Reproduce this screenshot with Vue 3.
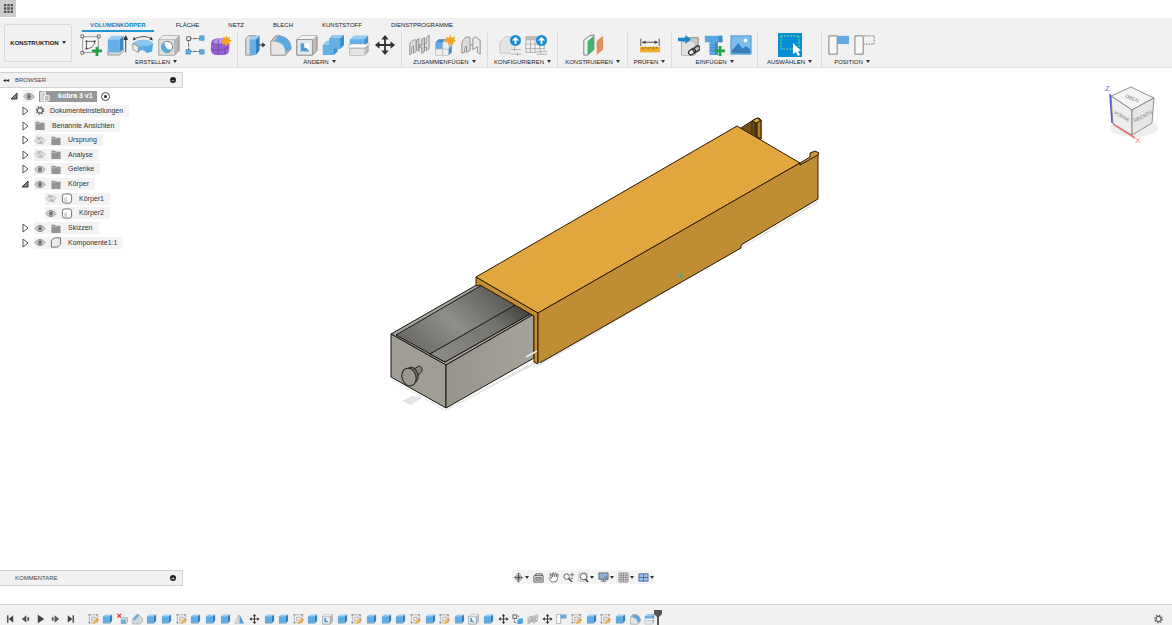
<script setup>
const tabs = ['VOLUMENKÖRPER', 'FLÄCHE', 'NETZ', 'BLECH', 'KUNSTSTOFF', 'DIENSTPROGRAMME']

const groups = [
  { label: 'ERSTELLEN', size: 'create', icons: ['sketch-new', 'extrude', 'revolve', 'hole', 'pattern', 'form'] },
  { label: 'ÄNDERN', size: 'modify', icons: ['presspull', 'fillet', 'shell', 'combine', 'split', 'move'] },
  { label: 'ZUSAMMENFÜGEN', size: 'three', icons: ['joint', 'component', 'joint-origin'] },
  { label: 'KONFIGURIEREN', size: 'two', icons: ['configure', 'config-table'] },
  { label: 'KONSTRUIEREN', size: 'two', icons: ['plane'] },
  { label: 'PRÜFEN', size: 'one', icons: ['measure'] },
  { label: 'EINFÜGEN', size: 'three', icons: ['insert', 'fastener', 'image'] },
  { label: 'AUSWÄHLEN', size: 'select', icons: ['select'] },
  { label: 'POSITION', size: 'position', icons: ['capture', 'revert'] }
]

const tree = [
  { name: 'Dokumenteinstellungen', level: 1, icon: 'gear' },
  { name: 'Benannte Ansichten', level: 1, icon: 'folder', views: true },
  { name: 'Ursprung', level: 1, icon: 'folder', eye: 'eye-off' },
  { name: 'Analyse', level: 1, icon: 'folder', eye: 'eye-off' },
  { name: 'Gelenke', level: 1, icon: 'folder', eye: 'eye' },
  { name: 'Körper', level: 1, icon: 'folder', eye: 'eye', open: true },
  { name: 'Körper1', level: 2, icon: 'body', eye: 'eye-off' },
  { name: 'Körper2', level: 2, icon: 'body', eye: 'eye' },
  { name: 'Skizzen', level: 1, icon: 'folder', eye: 'eye' },
  { name: 'Komponente1:1', level: 1, icon: 'cube', eye: 'eye' }
]

const nav = [
  { icon: 'orbit', name: 'Orbit', menu: true },
  { icon: 'lookat', name: 'Ansehen' },
  { icon: 'hand', name: 'Pan' },
  { icon: 'zoom', name: 'Zoom' },
  { icon: 'fit', name: 'Einpassen', menu: true },
  { icon: 'display', name: 'Anzeige', menu: true },
  { icon: 'grid', name: 'Raster', menu: true },
  { icon: 'viewports', name: 'Ansichtsfenster', menu: true }
]

const playback = ['first', 'prev', 'play', 'next', 'last']

const features = (
  'sketch box remove chamfer box box sketch box box box mirror move box box ' +
  'sketch box shell box sketch box box box sketch box sketch box shell box ' +
  'move assemble joint move capture sketch box sketch box fillet split'
).split(' ')
</script>

<template>
  <div class="app">
    <svg class="defs" aria-hidden="true">
      <defs>
        <linearGradient id="blue" x1="0" y1="0" x2="1" y2="1">
          <stop offset="0" stop-color="#7dbdec" /><stop offset="1" stop-color="#4a9fdb" />
        </linearGradient>
        <linearGradient id="inside" x1="0" y1="0.8" x2="1" y2="0.2">
          <stop offset="0" stop-color="#63625f" /><stop offset="0.45" stop-color="#8f8e8b" /><stop offset="1" stop-color="#4d4c49" />
        </linearGradient>
        <linearGradient id="floor" x1="0" y1="0.7" x2="1" y2="0">
          <stop offset="0" stop-color="#8b8984" /><stop offset="0.6" stop-color="#73716c" /><stop offset="1" stop-color="#373531" />
        </linearGradient>
        <linearGradient id="side" x1="0" y1="0" x2="1" y2="0">
          <stop offset="0" stop-color="#98958d" /><stop offset="1" stop-color="#a5a29a" />
        </linearGradient>
      </defs>

      <symbol id="apps" viewBox="0 0 12 12">
        <path d="M1 1h2.6v2.6H1zM4.7 1h2.6v2.6H4.7zM8.4 1H11v2.6H8.4zM1 4.7h2.6v2.6H1zM4.7 4.7h2.6v2.6H4.7zM8.4 4.7H11v2.6H8.4zM1 8.4h2.6V11H1zM4.7 8.4h2.6V11H4.7zM8.4 8.4H11V11H8.4z" fill="#555" />
      </symbol>
      <symbol id="sketch-new" viewBox="0 0 24 24">
        <path d="M3 3h17v17H3z" stroke="#777" stroke-width=".8" fill="#f7f7f7" />
        <path d="M1 1h3v3H1zM19 1h3v3h-3zM1 19h3v3H1z" fill="#fff" stroke="#444" stroke-width=".8" />
        <path d="M7 16V8h9c0 5-4 8-9 8z" fill="none" stroke="#555" />
        <path d="M6 7h2v2H6zM15 7h2v2h-2zM6 15h2v2H6z" fill="#444" />
        <path d="M17 14h3v3h4v3h-4v4h-3v-4h-4v-3h4z" fill="#24a148" />
      </symbol>
      <symbol id="sketch" viewBox="0 0 24 24">
        <path d="M3 3h17v17H3z" fill="#f8f8f8" stroke="#888" stroke-width="1.200" />
        <path d="M1 1h4v4H1zM18 1h4v4h-4zM1 18h4v4H1z" fill="#999" />
        <path d="M8 16V8h8c0 4-3 8-8 8z" fill="none" stroke="#777" stroke-width="1.200" />
        <path d="M11 23l1-5 7-7 4 4-7 7z" fill="#efb043" />
        <path d="M19 11l4 4" stroke="#d0433b" stroke-width="2" />
      </symbol>
      <symbol id="extrude" viewBox="0 0 24 24">
        <path d="M2 19l4-3h13v3l-4 4H2z" fill="#d4d4d4" stroke="#888" stroke-width=".8" />
        <path d="M2 6l4-4h13l-4 4z" fill="#9bcdf3" />
        <path d="M2 6h13v14H2z" fill="#65aee6" />
        <path d="M15 6l4-4v14l-4 4z" fill="#3a89c7" />
        <path d="M21.500 20V4M19.500 6l2-4 2 4z" stroke="#333" fill="#333" />
      </symbol>
      <symbol id="box" viewBox="0 0 24 24">
        <path d="M2 19l4-3h16l-5 7H2z" fill="#c9c9c9" />
        <path d="M2 6l5-4h15l-5 4z" fill="#9bcdf3" />
        <path d="M2 6h15v15H2z" fill="#5fabe5" />
        <path d="M17 6l5-4v14l-5 5z" fill="#347fbb" />
      </symbol>
      <symbol id="revolve" viewBox="0 0 24 24">
        <path d="M1 10c6-5 17-5 22 0l-1 9-6 2c-2-4-6-4-8-2l-6-2z" fill="url(#blue)" />
        <path d="M1 10c6-5 17-5 22 0l-6 4c-3-2-7-2-10 0z" fill="#8fc7f1" />
        <path d="M1 10l6 4v6l-6-3z" fill="#eee" stroke="#777" stroke-width=".8" />
        <path d="M2 6c6-4 14-4 19-1" fill="none" stroke="#444" />
        <path d="M1 7l1-4 2 3zM23 7l-4-1 2-3z" fill="#333" />
      </symbol>
      <symbol id="hole" viewBox="0 0 24 24">
        <path d="M1 6l5-4h17v16l-5 5H1z" fill="#b6b6b6" stroke="#888" />
        <path d="M1 6l5-4h17l-5 4z" fill="#ededed" /><path d="M1 6h17v17H1z" fill="#ddd" stroke="#aaa" stroke-width=".5" />
        <circle cx="10" cy="14" r="6" fill="#fff" stroke="#777" />
        <path d="M7 9a6 6 0 1 0 8 8c-4 1-8-3-8-8z" fill="#5aa8df" />
      </symbol>
      <symbol id="pattern" viewBox="0 0 24 24">
        <path d="M5 5h14M5 5v14M5 19h14" stroke="#555" stroke-dasharray="4 1" />
        <path d="M3 3h4v4H3z" fill="#fff" stroke="#555" />
        <path d="M17 2h5v5h-5zM2 17h5v5H2zM17 17h5v5h-5z" fill="#5dabe3" stroke="#3c8dca" stroke-width=".6" />
      </symbol>
      <symbol id="form" viewBox="0 0 24 24">
        <rect x="1" y="5" width="20" height="18" rx="6" fill="#9461ce" />
        <path d="M3 9c3-5 12-5 15-2-3 5-12 5-15 2z" fill="#bb91e8" />
        <path d="M2 10c5 2 12 2 16-2M1 16c6 3 14 2 20-2M9 6v17M16 9c1 4 1 9 0 13" fill="none" stroke="#6e40a5" stroke-width=".8" />
        <path d="M18 1l1 3 3-1-1 3 3 1-3 2 1 3-3-1-2 3-1-3-3 1 1-3-2-2 3-1-1-3 3 1z" fill="#f6a51b" />
      </symbol>
      <symbol id="presspull" viewBox="0 0 24 24">
        <path d="M2 5l3-3h8v18l-4 3H2z" fill="#ddd" stroke="#888" />
        <path d="M6 6l4-4h7l-4 4v17H6z" fill="#65aee6" /><path d="M13 6l4-4v16l-4 5z" fill="#2f83c3" />
        <path d="M6 6l4-4h7l-4 4z" fill="#9dcff4" /><path d="M16 12h5M20 10l3 2-3 2z" stroke="#333" fill="#333" />
      </symbol>
      <symbol id="fillet" viewBox="0 0 24 24">
        <path d="M1 8l5-6c10-1 17 5 17 14l-6 7H1z" fill="#c1c1c1" stroke="#888" />
        <path d="M1 8c9-2 16 3 16 12v3H1z" fill="#e5e5e5" stroke="#999" stroke-width=".7" />
        <path d="M9 2c8 0 14 6 14 14l-6 4c0-6-4-11-12-12z" fill="#58a8e2" />
      </symbol>
      <symbol id="chamfer" viewBox="0 0 24 24">
        <path d="M1 12L10 2h5l8 9v7l-5 5H1z" fill="#d8d8d8" stroke="#999" /><path d="M1 13L11 2l5 1L6 15z" fill="#5ba9e2" />
      </symbol>
      <symbol id="shell" viewBox="0 0 24 24">
        <path d="M1 6l5-4h17v16l-5 5H1z" fill="#bdbdbd" stroke="#888" /><path d="M1 6l5-4h17l-5 4z" fill="#f2f2f2" /><path d="M1 6h17v17H1z" fill="#e7e7e7" stroke="#888" stroke-width=".8" />
        <path d="M5 10h10v9H5z" fill="#fff" /><path d="M5 10v9h10l-4-4H9v-5z" fill="#4d9fda" />
      </symbol>
      <symbol id="combine" viewBox="0 0 24 24">
        <path d="M8 5l4-4h12v11l-4 4h-3v3l-4 4H1V12l4-4h3z" fill="#3b8dcb" />
        <path d="M8 5h12v11h-7v7H1V12h7z" fill="#64afe6" /><path d="M8 5l4-4h12l-4 4zM1 12l4-4h3v4z" fill="#91c9f2" />
      </symbol>
      <symbol id="split" viewBox="0 0 24 24">
        <path d="M2 6l5-4h15v7l-4 4H2z" fill="#3d90cd" /><path d="M2 6h16v7H2z" fill="#65afe7" /><path d="M2 6l5-4h15l-4 4z" fill="#9bcdf3" />
        <path d="M0 13l4-2h20l-5 4H0z" fill="#fff" stroke="#aaa" stroke-width=".6" />
        <path d="M2 16h16l4-3v6l-4 4H2z" fill="#c4c4c4" stroke="#888" stroke-width=".8" /><path d="M2 16h16v7H2z" fill="#e3e3e3" />
      </symbol>
      <symbol id="move" viewBox="0 0 24 24">
        <path d="M12 3v18M3 12h18" stroke="#333" stroke-width="2" />
        <path d="M12 1l4 5H8zM12 23l4-5H8zM1 12l5-4v8zM23 12l-5-4v8z" fill="#333" />
      </symbol>
      <symbol id="joint" viewBox="0 0 24 24">
        <path d="M2 23V12c0-4 5-7 7-5v12l-3 2v-8c-2 0-2 2-2 8z" fill="#dedede" stroke="#888" />
        <path d="M9 7l3-2v14l-3-3zM12 12h3V6l3-2v15l-3 2v-6h-3z" fill="#cfcfcf" stroke="#888" />
        <path d="M18 11l2-1V4l3-3v15l-3 2v-4l-2 1z" fill="#dedede" stroke="#888" />
      </symbol>
      <symbol id="joint-origin" viewBox="0 0 24 24">
        <path d="M2 21V10c1-4 4-7 7-7l2 1v14l-4 2v-7c-2 1-2 4-2 7z" fill="#dcdcdc" stroke="#888" />
        <path d="M11 12h3" stroke="#888" />
        <path d="M14 17V5l3-2 5 4v15l-3-2v-6l-2 1z" fill="#ececec" stroke="#888" />
      </symbol>
      <symbol id="component" viewBox="0 0 24 24">
        <path d="M2 9l3-3h14v14l-3 3H2z" fill="#bbb" stroke="#888" stroke-width=".7" />
        <path d="M2 9h7v7H2z" fill="#5facea" /><path d="M10 9h6v7h-6zM2 17h7v6H2zM10 17h6v6h-6z" fill="#ececec" /><path d="M2 9l3-3h7l-3 3zM16 16l3-3v7l-3 3z" fill="#3e90ce" />
        <path d="M18 0l1 4 4-1-1 3 2 2-3 1v3l-3-2-2 2-1-3-3-1 2-2-1-3 4 1z" fill="#f5a51e" />
      </symbol>
      <symbol id="configure" viewBox="0 0 24 24">
        <path d="M1 21V9l6-6h11v11l-6 7z" fill="#e4e4e4" stroke="#c4c4c4" /><path d="M13 16h11v8H13z" fill="#f1f1f1" /><path d="M13 17h11M13 22h11M17 15v4M20 20v4" stroke="#aaa" />
        <circle cx="18" cy="7" r="6" fill="#168ad5" /><path d="M18 3l4 4h-3v4h-2V7h-3z" fill="#fff" />
      </symbol>
      <symbol id="config-table" viewBox="0 0 24 24">
        <path d="M1 3h20v17H1z" fill="#f2f2f2" stroke="#aaa" /><path d="M1 3h20v4H1z" fill="#bbb" />
        <path d="M1 11h20M1 16h20M6 7v13M11 7v13M16 7v13" stroke="#aaa" /><path d="M13 17h11v7H13z" fill="#f2f2f2" /><path d="M13 19h11M13 22h11M17 17v4" stroke="#aaa" />
        <circle cx="18" cy="7" r="6" fill="#168ad5" /><path d="M18 3l4 4h-3v4h-2V7h-3z" fill="#fff" />
      </symbol>
      <symbol id="plane" viewBox="0 0 24 24">
        <path d="M2 7l6-5 5-1v16l-7 6H2z" fill="#f4f4f4" stroke="#777" /><path d="M6 8l7-6v15l-7 6z" fill="#41b36b" /><path d="M16 8l7-6v15l-7 6z" fill="#dc925d" />
      </symbol>
      <symbol id="measure" viewBox="0 0 24 24">
        <path d="M2 5v8M22 5v8M4 9h16" stroke="#444" /><path d="M3 9l4-2v4zM21 9l-4-2v4z" fill="#444" />
        <path d="M1 14h22v6H1z" fill="#f0ad2d" /><path d="M4 14v3M7 14v2M10 14v3M13 14v2M16 14v3M19 14v2" stroke="#8f6312" />
      </symbol>
      <symbol id="insert" viewBox="0 0 24 24">
        <path d="M4 9l4-5h14v13l-4 6H4z" fill="#c5c5c5" stroke="#888" /><path d="M4 9h14v14H4z" fill="#e2e2e2" />
        <path d="M0 4h8V1l6 5-6 5V8H0z" fill="#1686d0" />
        <rect x="11" y="17" width="8" height="5" rx="2.500" transform="rotate(-35 15 19)" fill="#f1f1f1" stroke="#333" stroke-width="1.500" />
        <rect x="16" y="14" width="8" height="5" rx="2.500" transform="rotate(-35 20 16)" fill="none" stroke="#333" stroke-width="1.500" />
      </symbol>
      <symbol id="fastener" viewBox="0 0 24 24">
        <path d="M1 2h19v7h-5v14H6V9H1z" fill="#5ba8e0" /><path d="M16 2h4v7h-4zM12 9h3v14h-3z" fill="#3b8cc8" /><path d="M6 12h9M6 15h9M6 18h9" stroke="#327fb8" stroke-width=".7" />
        <path d="M16 13h3v4h4v3h-4v4h-3v-4h-4v-3h4z" fill="#24a148" />
      </symbol>
      <symbol id="image" viewBox="0 0 24 24">
        <path d="M1 2h22v20H1z" fill="#7bbcec" stroke="#4a97d0" /><path d="M2 18l7-8 5 6 3-3 5 4v4H2z" fill="#347fb5" /><circle cx="17" cy="7" r="2" fill="#fff" />
      </symbol>
      <symbol id="select" viewBox="0 0 24 24">
        <path d="M0 0h24v24H0z" fill="#078ed2" /><path d="M3 3h18v13H3z" fill="none" stroke="#73d897" stroke-dasharray="2 1" />
        <path d="M15 10v11l3-2 2 4 2-1-2-4h3z" fill="#fff" />
      </symbol>
      <symbol id="capture" viewBox="0 0 24 24">
        <path d="M1 2h9v20H1z" fill="#f8f8f8" stroke="#777" /><path d="M10 2h13v9H10z" fill="#60ade5" />
      </symbol>
      <symbol id="revert" viewBox="0 0 24 24">
        <path d="M1 2h9v20H1z" fill="#f8f8f8" stroke="#777" /><path d="M11 2h11v9H11" fill="none" stroke="#777" stroke-dasharray="2 1" />
      </symbol>
      <symbol id="mirror" viewBox="0 0 24 24">
        <path d="M10 3v19H2z" fill="#e3e3e3" stroke="#999" /><path d="M12 2v20h10z" fill="#509fd7" />
      </symbol>
      <symbol id="remove" viewBox="0 0 24 24">
        <path d="M1 1l8 8M9 1L1 9" stroke="#d5333c" stroke-width="2.500" /><path d="M9 12l3-3h11v10l-3 3H9z" fill="#ddd" stroke="#777" /><path d="M9 13h10v9H9z" fill="#68afe0" />
      </symbol>
      <symbol id="assemble" viewBox="0 0 24 24">
        <path d="M2 3h8v8H2z" fill="#eee" stroke="#555" stroke-width="2" /><path d="M5 13v7h5M12 6h4" fill="none" stroke="#777" stroke-width="2" /><path d="M12 14l3-3h9v8l-3 4h-9z" fill="#4fa1df" />
      </symbol>
      <symbol id="folder" viewBox="0 0 12 12"><path d="M1 2h4l1 1h5v8H1z" fill="#949494" /><path d="M1 4h5l1-1" stroke="#d0d0d0" stroke-width=".7" fill="none" /></symbol>
      <symbol id="gear" viewBox="0 0 12 12">
        <circle cx="6" cy="6" r="4" fill="none" stroke="#666" stroke-width="1.500" stroke-dasharray="1.570 1.570" /><circle cx="6" cy="6" r="2.800" fill="none" stroke="#666" stroke-width="1.300" />
      </symbol>
      <symbol id="eye" viewBox="0 0 12 10"><path d="M1 5c3-4 7-4 10 0-3 4-7 4-10 0z" fill="#ddd" stroke="#888" /><circle cx="6" cy="5" r="2.200" fill="#777" /></symbol>
      <symbol id="eye-off" viewBox="0 0 12 10"><path d="M1 5c3-4 7-4 10 0-3 4-7 4-10 0zM3 1l6 8" fill="none" stroke="#a5a5a5" stroke-width=".8" /><circle cx="6" cy="5" r="2" fill="none" stroke="#a5a5a5" stroke-width=".7" /></symbol>
      <symbol id="body" viewBox="0 0 12 12"><rect x="1" y="1" width="10" height="10" rx="2.500" fill="#fff" stroke="#666" /><path d="M3 5h3v5H3z" fill="#d5d5d5" /></symbol>
      <symbol id="cube" viewBox="0 0 12 12"><path d="M1 4l3-3h7v7l-3 3H1z" fill="#eee" stroke="#666" stroke-linejoin="round" /><path d="M8 4v6M8 4l2-2" stroke="#ccc" stroke-width=".7" /></symbol>
      <symbol id="assembly" viewBox="0 0 12 12"><path d="M2 2l1-1h4v10H2z" fill="#ccc" stroke="#fff" /><path d="M6 6l1-1h4v5l-1 1H6z" fill="#bbb" stroke="#fff" /></symbol>
      <symbol id="closed" viewBox="0 0 10 10"><path d="M3 1l5 4-5 4z" fill="#fff" stroke="#555" /></symbol>
      <symbol id="open" viewBox="0 0 10 10"><path d="M8 2v6H2z" fill="#888" stroke="#333" /></symbol>
      <symbol id="orbit" viewBox="0 0 12 12"><path d="M6 1v10M1 6h10M4 3l2-2 2 2M4 9l2 2 2-2" stroke="#444" fill="none" stroke-width=".8" /><ellipse cx="6" cy="6" rx="4" ry="2" fill="none" stroke="#555" stroke-width=".8" /><circle cx="6" cy="6" r="1.500" fill="#444" /></symbol>
      <symbol id="lookat" viewBox="0 0 12 12"><path d="M1 4h10v7H1zM3 4V2h7v2" fill="#eee" stroke="#555" /><path d="M3 6h6v3H3z" fill="#aaa" stroke="#555" stroke-width=".7" /></symbol>
      <symbol id="hand" viewBox="0 0 12 12"><path d="M4 11L1 7l1-1 2 1-2-5 1-.500 2 4V1h1l1 4 1-4 1 .500v4l1-3h1c0 4-1 6-2 8z" fill="#fff" stroke="#555" stroke-width=".8" /></symbol>
      <symbol id="zoom" viewBox="0 0 12 12"><circle cx="4" cy="5" r="3" fill="#fff" stroke="#555" /><path d="M6 7l4 4" stroke="#444" stroke-width="1.500" /><path d="M8 3h4M10 1v4M8 7h3" stroke="#444" stroke-width=".8" /></symbol>
      <symbol id="fit" viewBox="0 0 12 12"><path d="M1 1h9v9H1z" fill="none" stroke="#777" stroke-width=".7" stroke-dasharray="2 1" /><circle cx="6" cy="5" r="3.500" fill="#fff" stroke="#555" /><path d="M8 8l3 3" stroke="#444" stroke-width="1.500" /></symbol>
      <symbol id="display" viewBox="0 0 12 12"><path d="M1 1h10v7H1z" fill="#8fb0d8" stroke="#666" /><path d="M3 10h6M6 8v2" stroke="#666" fill="none" /><path d="M7 5h4v4H7z" fill="#789" /></symbol>
      <symbol id="grid" viewBox="0 0 12 12"><path d="M1 1h10v10H1zM3.500 1v10M6 1v10M8.500 1v10M1 3.500h10M1 6h10M1 8.500h10" fill="#ddd" stroke="#777" stroke-width=".7" /></symbol>
      <symbol id="viewports" viewBox="0 0 12 12"><path d="M1 2h10v8H1zM6 2v8M1 6h10" fill="#9fc0e8" stroke="#466b9e" /></symbol>
      <symbol id="first" viewBox="0 0 12 12"><path d="M3 2v8" stroke="#444" stroke-width="1.500" /><path d="M9 2v8L4 6z" fill="#444" /></symbol>
      <symbol id="last" viewBox="0 0 12 12"><path d="M9 2v8" stroke="#444" stroke-width="1.500" /><path d="M3 2v8l5-4z" fill="#444" /></symbol>
      <symbol id="prev" viewBox="0 0 12 12"><path d="M7 2v8L2 6zM8 4h2v4H8z" fill="#555" /></symbol>
      <symbol id="next" viewBox="0 0 12 12"><path d="M5 2v8l5-4zM2 4h2v4H2z" fill="#555" /></symbol>
      <symbol id="play" viewBox="0 0 12 12"><path d="M3 1v10l7-5z" fill="#444" /></symbol>
    </svg>

    <header class="titlebar">
      <button class="apps" aria-label="Datenbereich"><svg><use href="#apps" /></svg></button>
    </header>

    <section class="ribbon">
      <button class="workspace-switch">KONSTRUKTION<i class="caret"></i></button>
      <div class="toolbar">
        <nav class="tabs">
          <button v-for="(tab, i) in tabs" :key="tab" class="tab" :class="{ active: i === 0 }">{{ tab }}</button>
        </nav>
        <div class="groups">
          <div v-for="group in groups" :key="group.label" class="group" :class="group.size">
            <div class="tools">
              <button v-for="icon in group.icons" :key="icon" class="tool" :aria-label="group.label + ' ' + icon">
                <svg><use :href="'#' + icon" /></svg>
              </button>
            </div>
            <button class="group-label">{{ group.label }}<i class="caret"></i></button>
          </div>
        </div>
      </div>
    </section>

    <main class="viewport">
      <svg class="scene" viewBox="0 68 1172 536" aria-hidden="true">
        <path d="M391 379l54 31 92-50-1 4-91 47-54-31zM402 401l10-5 11 1-12 8zM533 366l207-118 78-47v2l-76 45-205 119z" fill="#e4e4e4" />
        <g stroke="#171512" stroke-linejoin="round">
          <path d="M391 334l89-51 54 31-88 51z" fill="#a6a49e" />
          <path d="M396 335l86-50 50 28-87 49z" fill="url(#inside)" />
          <path d="M430 354l87-50 15 9-87 49z" fill="url(#floor)" />
          <path d="M391 334l55 31v43l-55-31z" fill="#a09d95" />
          <path d="M446 365l88-51v44l-88 50z" fill="url(#side)" />
        </g>
        <g stroke="#24221e">
          <path d="M414 369l5-3c2 0 3 2 3 4 0 3-3 4-6 6z" fill="#86837c" />
          <ellipse cx="412" cy="375" rx="6" ry="8" transform="rotate(-18 412 375)" fill="#77746d" />
          <ellipse cx="409" cy="377" rx="7" ry="9" transform="rotate(-18 409 377)" fill="#9b9890" />
        </g>
        <g stroke="#2a1a05" stroke-linejoin="round">
          <path d="M741 128l14-9 4-1 2 2v19l-4 0z" fill="#755017" />
          <path d="M752 122v12M755 121v15M757 123v16" stroke-width=".8" />
          <path d="M752 121l5-3 4 2-4 3z" fill="#dfa23a" />
          <path d="M757 123l4-3v19l-4-2z" fill="#b27d27" />
          <path d="M476 277l62 36v51l-4-2v-46l-54-31-4 1z" fill="#c58e30" />
          <path d="M476 277l261-151 63 37-262 150z" fill="#e2a63f" />
          <path d="M538 313l262-150v2l18-11v45l-77 46v3l-203 116z" fill="#bf8d34" />
          <path d="M800 163l10-6v-4l5-2 4 2-1 2-18 10z" fill="#cf9435" />
        </g>
        <path d="M526 357l11-6M533 368l7-5" stroke="#eeeeec" stroke-width="1.500" />
        <path d="M678 276h6M681 272v7" stroke="#45a99c" />
      </svg>

      <aside class="browser">
        <div class="panel-head">
          <i class="collapse">◂◂</i><span>BROWSER</span>
          <button class="dot" aria-label="Browser minimieren">−</button>
        </div>
        <ul class="tree">
          <li class="node root">
            <svg class="arrow"><use href="#open" /></svg>
            <span class="plate"><svg><use href="#eye" /></svg></span>
            <span class="title"><svg><use href="#assembly" /></svg><b>kobra 3 v1</b></span>
            <input type="radio" checked aria-label="kobra 3 v1 aktivieren" />
          </li>
          <li v-for="item in tree" :key="item.name" class="node" :class="'level' + item.level">
            <svg v-if="item.level === 1" class="arrow"><use :href="item.open ? '#open' : '#closed'" /></svg>
            <span class="plate" :class="{ settings: item.icon === 'gear', views: item.views }">
              <svg v-if="item.eye"><use :href="'#' + item.eye" /></svg>
              <svg><use :href="'#' + item.icon" /></svg>
              <span class="name">{{ item.name }}</span>
            </span>
          </li>
        </ul>
      </aside>

      <svg class="viewcube" viewBox="0 0 60 66" role="img" aria-label="ViewCube">
        <ellipse cx="33" cy="47" rx="24" ry="9" fill="#eee" />
        <path d="M10 15L30 6l23 11-22 12z" fill="#f4f4f4" stroke="#777" stroke-width=".8" />
        <path d="M10 15l21 14v25L12 43z" fill="#eee" stroke="#777" stroke-width=".8" />
        <path d="M31 29l22-12-2 25-20 12z" fill="#e6e6e6" stroke="#777" stroke-width=".8" />
        <path d="M9 13l2 29" stroke="#5557cf" stroke-width="1.500" /><path d="M12 43l22 14" stroke="#df7777" stroke-width="1.500" />
        <g class="faces">
          <text x="31" y="19" transform="rotate(22 31 17)">OBEN</text>
          <text x="21" y="37" transform="rotate(30 21 35)">VORNE</text>
          <text x="42" y="37" transform="rotate(-28 42 35)">RECHTS</text>
        </g>
        <text x="4" y="10" class="axis z">Z</text><text x="34" y="62" class="axis x">X</text>
      </svg>

      <section class="comments panel-head">
        <span>KOMMENTARE</span><button class="dot" aria-label="Kommentare öffnen">+</button>
      </section>

      <nav class="navbar">
        <button v-for="item in nav" :key="item.icon" :aria-label="item.name">
          <svg><use :href="'#' + item.icon" /></svg><i v-if="item.menu" class="caret"></i>
        </button>
      </nav>
    </main>

    <footer class="timeline">
      <div class="playback">
        <button v-for="p in playback" :key="p" :aria-label="p"><svg><use :href="'#' + p" /></svg></button>
      </div>
      <div class="history">
        <button v-for="(f, i) in features" :key="i" :aria-label="f"><svg><use :href="'#' + f" /></svg></button>
        <svg class="marker" viewBox="0 0 8 16"><path d="M0 0h8v4L5 7v9H3V7L0 4z" fill="#555" /></svg>
      </div>
      <button class="settings-button" aria-label="Einstellungen"><svg><use href="#gear" /></svg></button>
    </footer>
  </div>
</template>

<style>
body { background: #fff; }
</style>

<style scoped>
* { box-sizing: border-box; }
.app { display: flex; flex-direction: column; min-height: 100vh; overflow: hidden; font: 7px/10px "Liberation Sans", Arial, sans-serif; color: #333; }
.defs { position: absolute; width: 0; height: 0; }
button { margin: 0; padding: 0; border: 0; background: none; color: inherit; font: inherit; }
svg { display: block; flex: none; }
.caret { display: inline-block; margin-left: 3px; border: 2px solid transparent; border-top: 3px solid #333; border-bottom: 0; vertical-align: 1px; }
.titlebar { height: 18px; }
.apps { display: grid; place-items: center; width: 16px; height: 17px; background: #cdcdcd; }
.apps svg { width: 11px; height: 11px; }
.ribbon { display: flex; height: 50px; background: #f1f1f1; border-bottom: 1px solid #e0e0e0; font-size: 6px; color: #222; }
.workspace-switch { width: 68px; height: 38px; margin: 6px 3px 0 4px; border: 1px solid #d8d8d8; border-radius: 2px; font-weight: bold; white-space: nowrap; }
.toolbar { flex: 1; }
.tabs { display: flex; gap: 15px; height: 14px; padding-left: 7px; }
.tab { padding: 2px 7px 0; border-bottom: 2px solid transparent; white-space: nowrap; }
.tab.active { padding: 2px 8px 0; color: #0a84c6; border-color: #2297d6; font-weight: bold; }
.groups { display: flex; height: 35px; }
.group { display: flex; flex-direction: column; align-items: center; border-right: 1px solid #dcdcdc; }
.group:last-child { border: 0; }
.create { width: 163px; }
.modify { width: 164px; }
.three { width: 86px; }
.two { width: 70px; }
.one { width: 44px; }
.select { width: 64px; }
.position { width: 60px; }
.tools { display: flex; gap: 4px; height: 25px; align-items: center; }
.tool svg { width: 22px; height: 22px; }
.select .tool svg { width: 24px; height: 24px; }
.group-label { white-space: nowrap; }
.viewport { position: relative; flex: 1; display: grid; grid-template-columns: 1fr auto 1fr; grid-template-rows: 1fr auto; padding: 4px 0 18px; }
.scene { position: absolute; inset: 0; width: 100%; height: 100%; }
.browser { position: relative; width: 183px; }
.panel-head { display: flex; align-items: center; width: 183px; height: 16px; padding: 0 6px 0 15px; background: #f1f1f1; border: 1px solid #d2d2d2; border-left: 0; color: #444; font-size: 6px; }
.browser .panel-head { padding-left: 3px; }
.collapse { width: 12px; font-style: normal; color: #222; }
.dot { width: 6px; height: 6px; margin-left: auto; border-radius: 50%; background: #222; color: #fff; line-height: 6px; }
.tree { display: grid; grid-auto-rows: 1fr; height: 161px; margin: 1px 0 0; padding: 0; list-style: none; }
.node { display: flex; align-items: center; gap: 4px; }
.root { padding-left: 9px; }
.level1 { padding-left: 20px; }
.level2 { padding-left: 45px; }
.arrow { width: 10px; height: 10px; }
.plate { display: flex; align-items: center; gap: 4px; height: 12px; padding: 0 6px 0 0; background: #f3f3f3; }
.plate svg { width: 12px; height: 11px; }
.root .plate { padding: 0; }
.name { margin-left: 2px; white-space: nowrap; }
.settings .name { margin-left: 0; }
.title { display: flex; align-items: center; gap: 8px; height: 11px; padding-right: 4px; background: #989898; color: #fff; }
.title svg { width: 11px; height: 11px; }
input { appearance: none; width: 9px; height: 9px; margin: 0; border: 1px solid #444; border-radius: 50%; background: radial-gradient(#333 0 1px, #fff 2px); }
.viewcube { position: relative; grid-column: 3; justify-self: end; width: 60px; height: 66px; margin: 9px 11px 0 0; }
.faces { font-size: 5px; fill: #777; text-anchor: middle; }
.axis { font-size: 8px; }
.z { fill: #7778df; }
.x { fill: #ef7777; }
.comments { position: relative; }
.navbar { position: relative; display: flex; align-items: center; gap: 4px; height: 14px; padding: 0 1px; margin-right: 5px; background: #f4f4f4; }
.navbar button { display: flex; align-items: center; }
.navbar svg { width: 11px; height: 11px; }
.navbar .caret { margin-left: 1px; }
.timeline { display: flex; height: 21px; padding-top: 8px; background: #f1f1f1; border-top: 1px solid #d8d8d8; }
.playback { display: flex; gap: 4px; width: 86px; padding-left: 5px; }
.playback svg { width: 11px; height: 12px; }
.history { position: relative; display: grid; grid-template-columns: repeat(39, 1fr); width: 571px; height: 12px; justify-items: center; }
.history button svg { width: 11px; height: 12px; }
.marker { position: absolute; right: -5px; top: -3px; width: 8px; height: 16px; }
.settings-button { margin: 0 8px 0 auto; }
.settings-button svg { width: 11px; height: 12px; }
</style>
